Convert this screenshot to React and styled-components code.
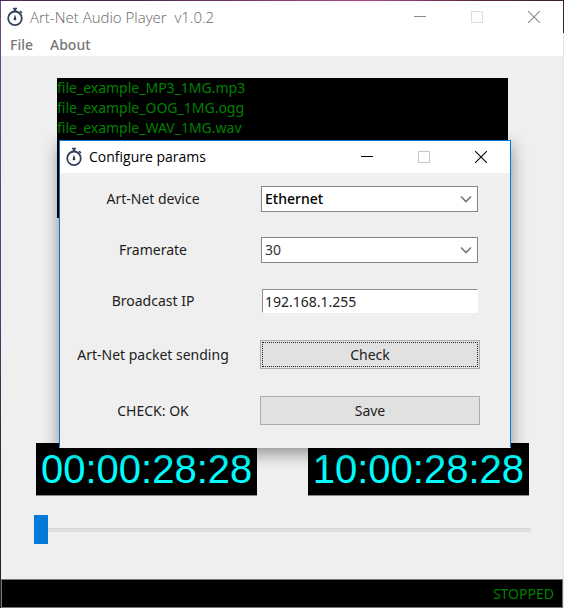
import React, { useState } from "react";
import styled, { createGlobalStyle } from "styled-components";

const GlobalStyle = createGlobalStyle`
  * { box-sizing: border-box; }
  html, body, #root { height: 100%; }
  body {
    margin: 0;
    font-family: "Noto Sans", "Open Sans", sans-serif;
    font-size: 14px;
    line-height: 20px;
    color: #1c1c1c;
  }
  button, input, select { font: inherit; color: inherit; margin: 0; border-radius: 0; }
`;

const Desktop = styled.div`
  min-height: 100%;
  display: flex;
  padding: 1px 1px 0;
  background: linear-gradient(180deg, transparent 1px, #6d4a86 1px, #54427a 45%, #2b2633 80%, #222 100%) left / 1px 100% no-repeat,
    linear-gradient(180deg, #3a1e35 33px, #e4e4e4 33px) right / 1px 100% no-repeat,
    linear-gradient(90deg, #4a2a5c, #40264f 20%, #b0488a 65%, #5a2740 85%, #3a1e35);
`;

const Window = styled.div`
  position: relative;
  flex: 1;
  min-width: 0;
  display: flex;
  flex-direction: column;
  background: #efefef;
`;

const TitleBar = styled.header`
  display: flex;
  align-items: center;
  height: 32px;
  padding: 0 1px 0 5px;
  background: #fff;
  color: ${(p) => (p.$dialog ? "#000" : "#666")};
`;

const Title = styled.h1`
  flex: 1;
  min-width: 0;
  margin: 0 0 0 6px;
  font-family: "Open Sans", "Noto Sans", sans-serif;
  font-size: ${(p) => p.$size}px;
  font-weight: ${(p) => (p.$light ? 300 : 400)};
  white-space: pre;
`;

const CaptionButton = styled.button`
  display: grid;
  place-items: center;
  width: 57px;
  height: 100%;
  padding: 0;
  border: 0;
  background: none;
  color: ${(p) => p.$color};
`;

const MenuBar = styled.nav`
  display: flex;
  gap: 17px;
  height: 23px;
  padding-left: 9px;
  background: #fff;
`;

const MenuItem = styled.button`
  padding: 0;
  border: 0;
  background: none;
  color: #777;
  font-weight: 500;
  line-height: 22px;
`;

const Content = styled.main`
  flex: 1;
  display: flex;
  flex-direction: column;
  padding: 22px 32px 0 33px;
`;

const FileList = styled.ul`
  height: 140px;
  margin: 0 23px;
  padding: 0;
  list-style: none;
  background: #000;
  color: #008000;
`;

const Clocks = styled.div`
  display: flex;
  justify-content: space-between;
  margin: 225px 2px 0;
`;

const Clock = styled.output`
  padding: 2px 5px;
  border-bottom: 1px solid #888;
  background: #000;
  color: #00ffff;
  font: 40px/48px "Liberation Sans", Arial, sans-serif;
`;

const Slider = styled.input`
  appearance: none;
  width: 100%;
  height: 29px;
  margin: 19px 0 34px;
  background: linear-gradient(#d6d6d6 1px, #dfdfdf 1px) center / 100% 4px no-repeat;

  &::-webkit-slider-thumb {
    appearance: none;
    width: 14px;
    height: 29px;
    border: 0;
    border-radius: 0;
    background: #007ad9;
  }
`;

const StatusBar = styled.footer`
  height: 29px;
  padding: 0 8px;
  border: 1px solid #777;
  background: #000;
  color: #008000;
  font-size: 14px;
  line-height: 28px;
  text-align: right;
`;

const Dialog = styled.section`
  position: absolute;
  top: 139px;
  left: 58px;
  right: 52px;
  border: 1px solid #0078d7;
  border-bottom-color: #efefef;
  background: #efefef;
  box-shadow: 0 5px 16px rgba(0, 0, 0, 0.42);
`;

const Form = styled.form`
  display: flex;
  flex-direction: column;
  gap: 25px;
  padding: 13px 30px 21px 0;
`;

const Row = styled.div`
  display: grid;
  grid-template-columns: 186px 1fr;
  column-gap: 14px;
  align-items: center;
  min-height: ${(p) => p.$height}px;
`;

const Label = styled.label`
  text-align: center;
`;

const SelectBox = styled.div`
  display: grid;
  align-items: center;
  margin: 0 2px 0 1px;

  > * { grid-area: 1 / 1; }
  > svg { justify-self: end; margin-right: 6px; pointer-events: none; }
`;

const Select = styled.select`
  appearance: none;
  width: 100%;
  height: 26px;
  padding: 0 20px 0 3px;
  border: 1px solid #858585;
  background: #fff;
  color: ${(p) => (p.$strong ? "#000" : "#333")};
  font-weight: ${(p) => (p.$strong ? 500 : 400)};
`;

const TextInput = styled.input`
  height: 24px;
  min-width: 0;
  margin: 0 2px;
  padding: 0 2px;
  border: 1px solid #fff;
  border-top-color: #909090;
  border-left-color: #909090;
  background: #fff;
`;

const PushButton = styled.button`
  height: 29px;
  padding: 0;
  border: 1px solid #adadad;
  background: #e1e1e1;
  outline: ${(p) => (p.$focused ? "1px dotted #222" : "none")};
  outline-offset: -3px;
`;

const StopwatchIcon = () => (
  <svg width="18" height="20" viewBox="0 0 18 20" fill="none" stroke="#33435f" aria-hidden="true">
    <circle cx="9" cy="11.3" r="6.8" strokeWidth="1.8" />
    <path d="M9 4.5V1.8" strokeWidth="2.4" />
    <path d="M7 1.5h4M14 4.2l2 1.8" strokeWidth="1.6" />
    <path d="M9 7.4l1.2 4.2a1.3 1.3 0 1 1-2.4 0z" fill="#26344f" stroke="none" />
  </svg>
);

const Caption = ({ dialog }) => {
  const color = dialog ? "#000" : "#8c8c8c";
  return (
    <>
      <CaptionButton type="button" aria-label="Minimize" $color={color}>
        <svg width="12" height="12"><path d="M0 5.5h12" stroke="currentColor" /></svg>
      </CaptionButton>
      <CaptionButton type="button" aria-label="Maximize" disabled $color={dialog ? "#c4c4c4" : "#dedede"}>
        <svg width="12" height="12"><rect x=".5" y=".5" width="11" height="11" fill="none" stroke="currentColor" /></svg>
      </CaptionButton>
      <CaptionButton type="button" aria-label="Close" $color={color}>
        <svg width="12" height="12"><path d="M0 0l12 12M12 0L0 12" stroke="currentColor" strokeWidth="1.1" /></svg>
      </CaptionButton>
    </>
  );
};

const DropDown = ({ id, options, strong }) => (
  <SelectBox>
    <Select id={id} $strong={strong}>
      {options.map((option) => <option key={option}>{option}</option>)}
    </Select>
    <svg width="12" height="8" fill="none" stroke="#777" strokeWidth="1.6"><path d="M1 1.5l5 5 5-5" /></svg>
  </SelectBox>
);

const files = ["file_example_MP3_1MG.mp3", "file_example_OOG_1MG.ogg", "file_example_WAV_1MG.wav"];

export default function App() {
  const [position, setPosition] = useState(0);
  const [address, setAddress] = useState("192.168.1.255");

  return (
    <Desktop>
      <GlobalStyle />
      <Window>
        <TitleBar>
          <StopwatchIcon />
          <Title $size={15} $light>{"Art-Net Audio Player  v1.0.2"}</Title>
          <Caption />
        </TitleBar>
        <MenuBar>
          <MenuItem type="button">File</MenuItem>
          <MenuItem type="button">About</MenuItem>
        </MenuBar>
        <Content>
          <FileList>
            {files.map((file) => <li key={file}>{file}</li>)}
          </FileList>
          <Clocks>
            <Clock>00:00:28:28</Clock>
            <Clock>10:00:28:28</Clock>
          </Clocks>
          <Slider
            type="range"
            aria-label="Playback position"
            value={position}
            onChange={(e) => setPosition(Number(e.target.value))}
          />
        </Content>
        <StatusBar>STOPPED</StatusBar>

        <Dialog role="dialog" aria-labelledby="dialog-title">
          <TitleBar $dialog>
            <StopwatchIcon />
            <Title as="h2" id="dialog-title" $size={14}>Configure params</Title>
            <Caption dialog />
          </TitleBar>
          <Form onSubmit={(e) => e.preventDefault()}>
            <Row $height={26}>
              <Label htmlFor="device">Art-Net device</Label>
              <DropDown id="device" options={["Ethernet"]} strong />
            </Row>
            <Row $height={26}>
              <Label htmlFor="framerate">Framerate</Label>
              <DropDown id="framerate" options={["30"]} />
            </Row>
            <Row $height={26}>
              <Label htmlFor="broadcast">Broadcast IP</Label>
              <TextInput id="broadcast" value={address} onChange={(e) => setAddress(e.target.value)} />
            </Row>
            <Row $height={31}>
              <Label htmlFor="check">Art-Net packet sending</Label>
              <PushButton id="check" type="button" aria-label="Check" $focused>Check</PushButton>
            </Row>
            <Row $height={31}>
              <Label as="output">CHECK: OK</Label>
              <PushButton type="submit">Save</PushButton>
            </Row>
          </Form>
        </Dialog>
      </Window>
    </Desktop>
  );
}
